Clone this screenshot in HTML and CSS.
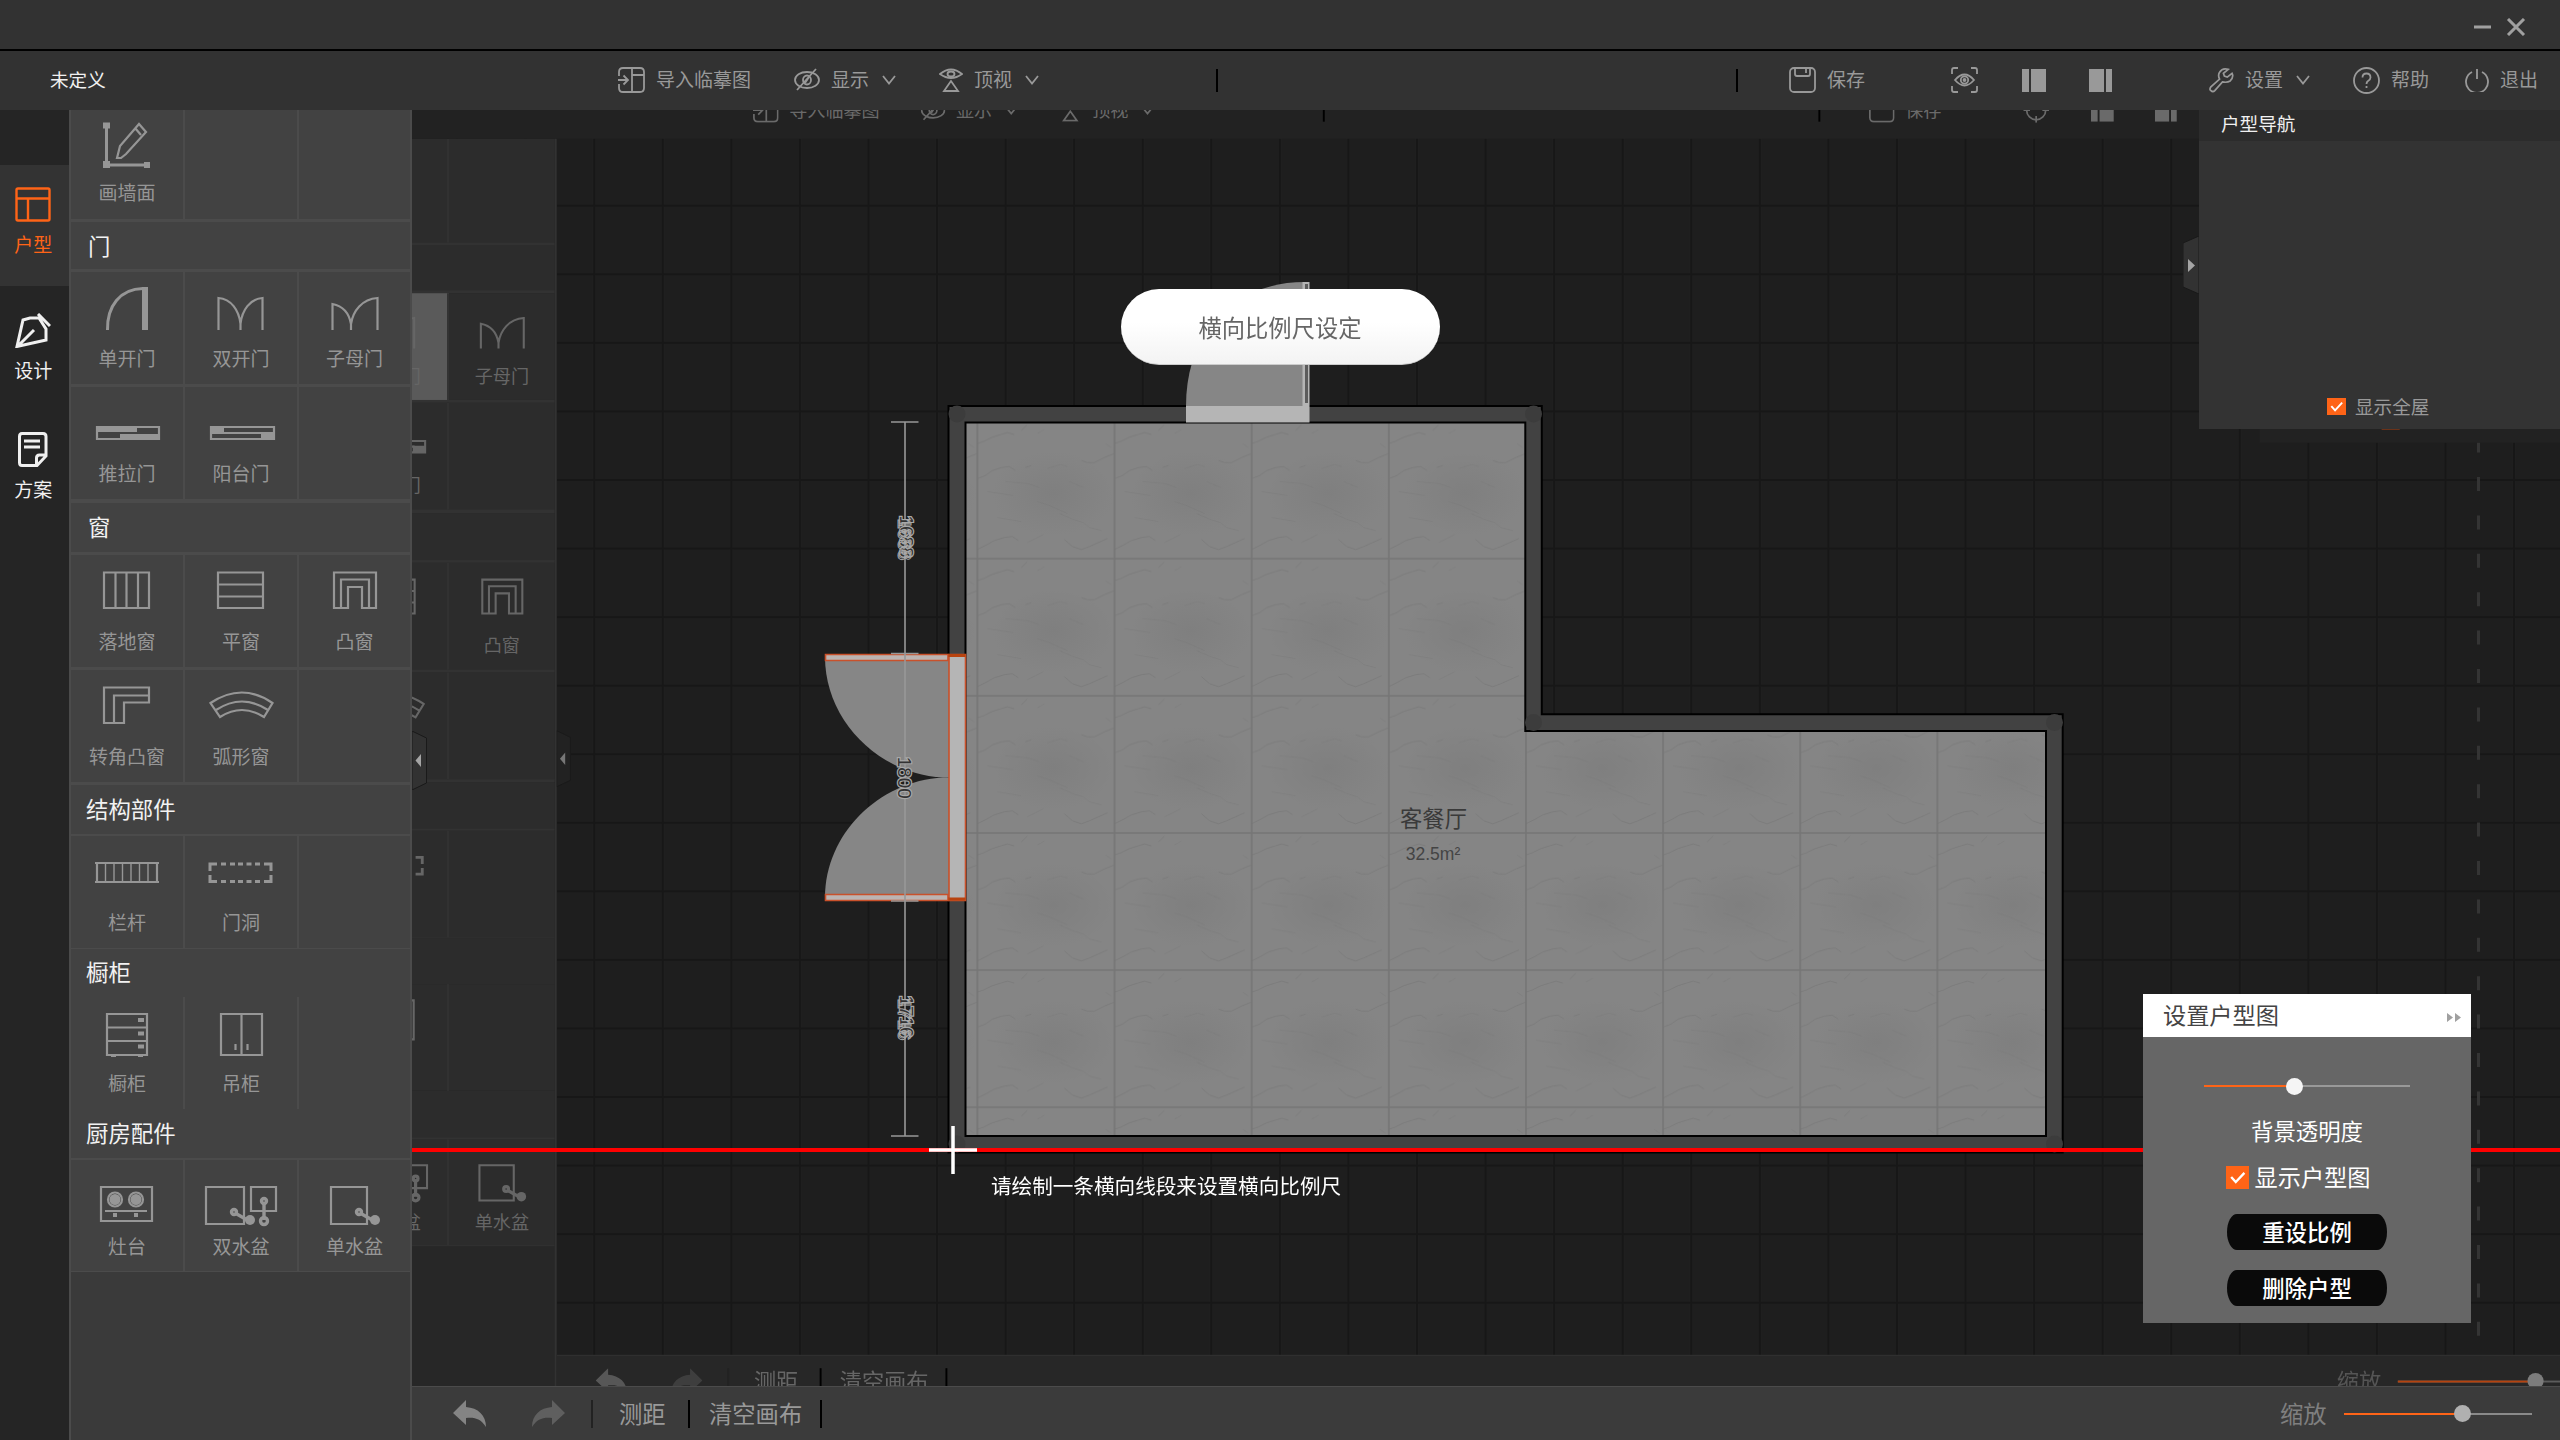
FILE: index.html
```html
<!DOCTYPE html>
<html lang="zh-CN">
<head>
<meta charset="utf-8">
<title>户型设计</title>
<link rel="stylesheet" href="styles.css">
</head>
<body>
<svg class="sprite" aria-hidden="true">
  <symbol id="import" viewBox="0 0 27 26"><path d="M1 9V5Q1 1 5 1h17q4 0 4 4v16q0 4-4 4H5q-4 0-4-4v-4M14 1v24M14 8h12M0 13h9M5.500 8.500 10 13l-4.500 4.500"/></symbol>
  <symbol id="eye-off" viewBox="0 0 26 24"><ellipse cx="13" cy="12" rx="12" ry="8"/><ellipse cx="13" cy="12" rx="4" ry="4.500"/><path d="M22 1 3 22M15 9l-4 6"/></symbol>
  <symbol id="top-view" viewBox="0 0 24 24"><path d="M1 6q11-9 22 0q-11 8-22 0z"/><ellipse cx="12" cy="6" rx="3.500" ry="2.500"/><path d="M12 13 5 23h14z"/></symbol>
  <symbol id="chev" viewBox="0 0 14 10"><path d="m1 1 6 7.500L13 1"/></symbol>
  <symbol id="save" viewBox="0 0 27 26"><rect x="1" y="1" width="25" height="24" rx="4"/><path d="M6 1v6q0 2 2 2h11q2 0 2-2V1M17 2v4"/></symbol>
  <symbol id="scan" viewBox="0 0 27 26"><path d="M1 7V3q0-2 2-2h4M20 1h4q2 0 2 2v4M26 19v4q0 2-2 2h-4M7 25H3q-2 0-2-2v-4M4 13q9.500-11 19 0q-9.500 11-19 0z"/><circle cx="13.500" cy="13" r="3.700"/><circle cx="13.500" cy="13" r="1"/></symbol>
  <symbol id="target" viewBox="0 0 27 26"><circle cx="13.500" cy="13" r="10"/><path d="M13.500 0v7M13.500 19v7M0 13h7M20 13h7"/></symbol>
  <symbol id="dock-left" viewBox="0 0 24 23"><path class="solid" d="M0 0h7v23H0zM9 0h15v23H9z"/></symbol>
  <symbol id="dock-right" viewBox="0 0 24 23"><path class="solid" d="M0 0h15v23H0zM17 0h6v23h-6z"/></symbol>
  <symbol id="wrench" viewBox="0 0 26 26"><path d="M20 2q-6-2-9 3q-2 3 0 7l-9 8q-2 3 0 4q2 2 4 0l8-9q5 1 8-1q4-4 2-8l-5 4-3-1-1-3z"/></symbol>
  <symbol id="help" viewBox="0 0 27 27"><circle cx="13.500" cy="13.500" r="12.500"/><path d="M9.500 10.500q0-4 4-4t4 4q0 2-2.500 3.500q-1.500 1-1.500 3M13.500 19v2"/></symbol>
  <symbol id="power" viewBox="0 0 24 24"><path d="M7 4a11 11 0 1 0 10 0M12 1v10"/></symbol>

  <symbol id="plan" viewBox="0 0 36 35"><rect x="1.500" y="1.500" width="33" height="32" rx="1.500"/><path d="M1 11.500h34M13 11.500V34"/></symbol>
  <symbol id="pen" viewBox="0 0 36 35"><path d="M8 7 15 5 24 5 31 16V27L2 33.500zM3 33 19 17M23 1 35 13"/></symbol>
  <symbol id="doc" viewBox="0 0 30 35"><path d="M4 1.500h21q3 0 3 3V24L19 33.500H4q-2.500 0-2.500-3v-26q0-3 2.500-3zM18.500 33V26q0-3 3-3H28M6 9h16M6 15h16"/></symbol>

  <symbol id="i-wall" viewBox="0 0 80 60"><path class="thick" d="M19.500 12v37M20 50h40"/><path d="M30 43l3-12L52 9l7 8-20 22-5 4zM48 13l6 7"/><path class="solid" d="M16 7.500h7v6h-7zM16 46h7v7h-7zM57 47h6v6h-6z"/></symbol>
  <symbol id="i-door1" viewBox="0 0 80 60"><path class="thick" d="M20.500 49C20 25 33 8 56 7.500"/><path class="solid" d="M55 6h6v43h-6z"/></symbol>
  <symbol id="i-door2" viewBox="0 0 80 60"><path d="M17.500 49V17C30 18 38 29 39.500 43C41 29 49 18 61.500 17V49M39.500 40v9"/></symbol>
  <symbol id="i-door3" viewBox="0 0 80 60"><path d="M17.500 49V23C28 25 34 32 36 43C38 30 47 18 62.500 17V49M36 40v9"/></symbol>
  <symbol id="i-slide" viewBox="0 0 80 60"><path d="M10 31h62v12H10z"/><path class="solid" d="M10 31h40v5H10zM33 38h39v5H33z"/></symbol>
  <symbol id="i-balcony" viewBox="0 0 80 60"><path d="M10 31h63v12H10zM22 37h40"/><path class="solid" d="M10 31h13v7H10zM60 36h13v7H60z"/></symbol>
  <symbol id="i-fwin" viewBox="0 0 80 60"><path d="M17 8.500h45v35.500H17zM28.500 8v36M39.500 8v36M51 8v36"/></symbol>
  <symbol id="i-hwin" viewBox="0 0 80 60"><path d="M17 8.500h45v35.500H17zM17 20.500h45M17 32.500h45"/></symbol>
  <symbol id="i-bay" viewBox="0 0 80 60"><path d="M19 44V8.500h42V44H47V23H33V44zM26 44V15.500h28V44"/></symbol>
  <symbol id="i-corner" viewBox="0 0 80 60"><path d="M17 44V8.500h45v15H37V44zM27 44V16.500h35"/></symbol>
  <symbol id="i-arc" viewBox="0 0 80 60"><path d="M9.500 24Q41 3 71.500 24L63 38Q41 24 19 38zM15 31Q41 14 67 31"/></symbol>
  <symbol id="i-rail" viewBox="0 0 80 60"><path d="M8 18h64M8 37h64M10 18v19M70 18v19"/><path class="hair" d="M18.500 18v19M27 18v19M35.500 18v19M44 18v19M52.500 18v19M61 18v19"/></symbol>
  <symbol id="i-hole" viewBox="0 0 80 60"><path class="thick" d="M9 26V19h7M20 19h5M29 19h5M37 19h5M45.500 19h5M54 19h5M63 19h7v7M70 30v6.500h-7M59 36.500h-5M50.500 36.500h-5M42 36.500h-5M34 36.500h-5M25 36.500h-5M16 36.500H9V30"/></symbol>
  <symbol id="i-cab" viewBox="0 0 80 60"><path d="M20 8h40v41H20zM20 21.500h40M20 35h40"/><path class="solid" d="M51 12h6v4h-6zM51 25.500h6v4h-6zM51 38.500h6v4h-6zM24 49h5v2h-5zM51 49h5v2h-5z"/></symbol>
  <symbol id="i-hang" viewBox="0 0 80 60"><path d="M20 8h41v41H20zM40.500 8v41M34.500 38v6M46.500 38v6"/></symbol>
  <symbol id="i-stove" viewBox="0 0 80 60"><path d="M14 18h51v34H14zM18 42h42"/><circle class="solid" cx="28" cy="30.500" r="5.500"/><circle class="solid" cx="49" cy="30.500" r="5.500"/><circle cx="28" cy="30.500" r="7"/><circle cx="49" cy="30.500" r="7"/><path class="solid" d="M26 44h4v4h-4zM47 44h4v4h-4z"/></symbol>
  <symbol id="i-sink2" viewBox="0 0 80 60"><path d="M5 18h38v37H5zM50 18h25v24H50z"/><g class="tap"><path d="m34 44 14 8M63 33v18"/><circle cx="33" cy="43" r="2.500"/><circle class="solid" cx="49" cy="51" r="5"/><circle cx="63" cy="32" r="2.500"/><circle cx="63" cy="52" r="3.500"/></g></symbol>
  <symbol id="i-sink1" viewBox="0 0 80 60"><path d="M16 18h36v37H16z"/><g class="tap"><path d="m45 44 14 8"/><circle cx="44" cy="43" r="2.500"/><circle class="solid" cx="60" cy="51" r="5"/></g></symbol>
  <symbol id="undo" viewBox="0 0 33 27"><path class="solid" d="M0 13 13 0v7C25 8 33 15 33 27C28 19 22 17 13 18v7z"/></symbol>
  <symbol id="check" viewBox="0 0 20 18"><path d="m4.500 8.500 4 4.500L16 5"/></symbol>
</svg>

<div class="shell">
  <header class="titlebar">
    <svg class="win" viewBox="0 0 52 18"><path d="M0 9h17M34 1l16 16M50 1 34 17"/></svg>
  </header>
  <nav class="toolbar">
    <span class="project">未定义</span>
    <span class="tool"><svg class="ic" width="27" height="26"><use href="#import"/></svg><b>导入临摹图</b></span>
    <span class="tool"><svg class="ic" width="26" height="24"><use href="#eye-off"/></svg><b>显示</b><svg class="ic chev" width="14" height="10"><use href="#chev"/></svg></span>
    <span class="tool"><svg class="ic" width="24" height="24"><use href="#top-view"/></svg><b>顶视</b><svg class="ic chev" width="14" height="10"><use href="#chev"/></svg></span>
    <i class="sep"></i>
    <i class="sep"></i>
    <span class="tool"><svg class="ic" width="27" height="26"><use href="#save"/></svg><b>保存</b></span>
    <span class="tool"><svg class="ic" width="27" height="26"><use href="#scan"/></svg></span>
    <span class="tool"><svg class="ic" width="24" height="23"><use href="#dock-left"/></svg></span>
    <span class="tool"><svg class="ic" width="24" height="23"><use href="#dock-right"/></svg></span>
    <span class="tool"><svg class="ic" width="25" height="26"><use href="#wrench"/></svg><b>设置</b><svg class="ic chev" width="14" height="10"><use href="#chev"/></svg></span>
    <span class="tool"><svg class="ic" width="27" height="27"><use href="#help"/></svg><b>帮助</b></span>
    <span class="tool"><svg class="ic" width="24" height="24"><use href="#power"/></svg><b>退出</b></span>
  </nav>

  <div class="work">
    <aside class="tabs">
      <div class="tab active"><svg class="ic" width="36" height="35"><use href="#plan"/></svg><span>户型</span></div>
      <div class="tab"><svg class="ic" width="36" height="35"><use href="#pen"/></svg><span>设计</span></div>
      <div class="tab"><svg class="ic" width="30" height="35"><use href="#doc"/></svg><span>方案</span></div>
    </aside>

    <aside class="panel">
      <div class="row first"><div class="cell"><svg><use href="#i-wall"/></svg><span>画墙面</span></div><div class="cell"></div><div class="cell"></div></div>
      <h3 class="h-door">门</h3>
      <div class="row"><div class="cell"><svg><use href="#i-door1"/></svg><span>单开门</span></div><div class="cell"><svg><use href="#i-door2"/></svg><span>双开门</span></div><div class="cell"><svg><use href="#i-door3"/></svg><span>子母门</span></div></div>
      <div class="row last"><div class="cell"><svg><use href="#i-slide"/></svg><span>推拉门</span></div><div class="cell"><svg><use href="#i-balcony"/></svg><span>阳台门</span></div><div class="cell"></div></div>
      <h3 class="h-window">窗</h3>
      <div class="row"><div class="cell"><svg><use href="#i-fwin"/></svg><span>落地窗</span></div><div class="cell"><svg><use href="#i-hwin"/></svg><span>平窗</span></div><div class="cell"><svg><use href="#i-bay"/></svg><span>凸窗</span></div></div>
      <div class="row"><div class="cell"><svg><use href="#i-corner"/></svg><span>转角凸窗</span></div><div class="cell"><svg><use href="#i-arc"/></svg><span>弧形窗</span></div><div class="cell"></div></div>
      <h3 class="h-part">结构部件</h3>
      <div class="row thin"><div class="cell"><svg><use href="#i-rail"/></svg><span>栏杆</span></div><div class="cell"><svg><use href="#i-hole"/></svg><span>门洞</span></div><div class="cell"></div></div>
      <h3 class="h-cabinet">橱柜</h3>
      <div class="row open"><div class="cell"><svg><use href="#i-cab"/></svg><span>橱柜</span></div><div class="cell"><svg><use href="#i-hang"/></svg><span>吊柜</span></div><div class="cell"></div></div>
      <h3 class="h-kitchen">厨房配件</h3>
      <div class="row end"><div class="cell"><svg><use href="#i-stove"/></svg><span>灶台</span></div><div class="cell"><svg><use href="#i-sink2"/></svg><span>双水盆</span></div><div class="cell"><svg><use href="#i-sink1"/></svg><span>单水盆</span></div></div>
    </aside>

    <div class="column">
      <main class="stage">
        <svg class="plan" viewBox="412 110 2148 1276">
          <defs>
            <pattern id="grid" x="45.700" y="0" width="68.565" height="68.565" patternUnits="userSpaceOnUse"><path class="gridline" d="M0 0H68.565M0 0V68.565M68.565 0V68.565M0 68.565H68.565"/></pattern>
            <radialGradient id="cloud"><stop offset="0" stop-color="#7f7f7f"/><stop offset="1" stop-color="#7f7f7f" stop-opacity="0"/></radialGradient>
            <pattern id="tile" x="977.400" y="558.700" width="137.140" height="137.140" patternUnits="userSpaceOnUse">
              <rect class="floor" width="137.140" height="137.140"/>
              <ellipse fill="url(#cloud)" cx="76" cy="72" rx="61" ry="42"/>
              <path class="vein" d="M0 22 6 20 14 16 20 14 30 11 37 13M44 9 50 3M0 57 8 54 15 49 24 46 32 45 38 49M48 46 54 44M104 39 110 41 117 41 127 36 137 32M0 128 8 124 17 119 27 116 35 115 41 119M87 118 95 125 104 128 112 125 121 121 130 117"/>
              <path class="vein faint" d="M60 12 67 8M70 47 83 43 90 45M28 60 50 62 62 66M10 70 36 74M60 80 72 84 90 92M82 92 96 98 106 101 112 106 124 109M50 121 58 117 66 113M128 22 134 26M92 60 106 66M20 96 44 100"/>
              <path class="joint" d="M0 0H137.140V137.140H0z"/>
            </pattern>
          </defs>
          <rect class="ground" x="412" y="110" width="2148" height="1276"/>
          <rect x="412" y="110" width="2148" height="1276" fill="url(#grid)"/>
          <path class="bound" d="M2478.500 438.600V1337"/>

          <path class="wall" d="M948.500 406H1541.800V714.300H2062.700V1152.500H948.500z"/>
          <path class="edge" fill="url(#tile)" d="M965.500 422.500H1525.300V731H2046V1136H965.500z"/>
          <g class="joints"><circle cx="957" cy="414" r="8.500"/><circle cx="1533.500" cy="414" r="8.500"/><circle cx="1533.500" cy="722.500" r="8.500"/><circle cx="2054.500" cy="722.500" r="8.500"/><circle cx="2054.500" cy="1144" r="8.500"/><circle cx="957" cy="1144" r="8.500"/></g>

          <path class="swing" d="M1186 406C1186 330 1235 282 1305 282V406z"/>
          <path class="sill" d="M1186 406H1309.500V422.500H1186zM1302.500 282h7v124h-7z"/>
          <path class="slot" d="M1306.500 284V403"/>

          <path class="swing" d="M825 657H949V777.500H943C878 774 825 720 825 657z"/>
          <path class="swing" d="M825 897H949V777.500H943C878 781 825 835 825 897z"/>
          <path class="leaf" d="M825.500 654.500h122.500v6h-122.500zM825.500 894.500h122.500v6h-122.500z"/>
          <path class="leaf base" d="M949 654.500h16.500v246H949z"/>
          <path class="hinge" d="M948.500 655.500h17M948.500 899h17"/>

          <path class="dim" d="M905 422V1136M891 422h27.500M891 653.500h27.500M891 901h27.500M891 1136h27.500"/>
          <g class="num">
            <text transform="translate(899.500 536.500) rotate(90)">1688</text><text class="over" transform="translate(898 539.500) rotate(90)">1688</text>
            <text transform="translate(898 777.700) rotate(90)">1800</text>
            <text transform="translate(899.500 1016.500) rotate(90)">1716</text><text class="over" transform="translate(898 1019.500) rotate(90)">1716</text>
          </g>
          <text class="room" x="1433.500" y="827">客餐厅</text>
          <text class="area" x="1433" y="860">32.5m²</text>
        </svg>

        <div class="shell ghost">
          <header class="titlebar"></header>
          <nav class="toolbar">
            <span class="project"></span>
            <span class="tool"><svg class="ic" width="27" height="26"><use href="#import"/></svg><b>导入临摹图</b></span>
            <span class="tool"><svg class="ic" width="26" height="24"><use href="#eye-off"/></svg><b>显示</b><svg class="ic chev" width="14" height="10"><use href="#chev"/></svg></span>
            <span class="tool"><svg class="ic" width="24" height="24"><use href="#top-view"/></svg><b>顶视</b><svg class="ic chev" width="14" height="10"><use href="#chev"/></svg></span>
            <i class="sep"></i>
            <i class="sep"></i>
            <span class="tool"><svg class="ic" width="27" height="26"><use href="#save"/></svg><b>保存</b></span>
            <span class="tool"><svg class="ic" width="27" height="26"><use href="#target"/></svg></span>
            <span class="tool"><svg class="ic" width="24" height="23"><use href="#dock-left"/></svg></span>
            <span class="tool"><svg class="ic" width="24" height="23"><use href="#dock-right"/></svg></span>
          </nav>
          <div class="work">
            <div></div>
            <div class="panel">
              <div class="row first"><div class="cell"></div><div class="cell"></div><div class="cell"></div></div>
              <h3></h3>
              <div class="row"><div class="cell"></div><div class="cell lit"><svg><use href="#i-door2"/></svg><span>双开门</span></div><div class="cell"><svg><use href="#i-door3"/></svg><span>子母门</span></div></div>
              <div class="row last"><div class="cell"></div><div class="cell"><svg><use href="#i-balcony"/></svg><span>阳台门</span></div><div class="cell"></div></div>
              <h3 class="h-window"></h3>
              <div class="row"><div class="cell"></div><div class="cell"><svg><use href="#i-hwin"/></svg></div><div class="cell"><svg><use href="#i-bay"/></svg><span>凸窗</span></div></div>
              <div class="row"><div class="cell"></div><div class="cell"><svg><use href="#i-arc"/></svg></div><div class="cell"></div></div>
              <h3 class="h-part"></h3>
              <div class="row thin"><div class="cell"></div><div class="cell"><svg><use href="#i-hole"/></svg></div><div class="cell"></div></div>
              <h3 class="h-cabinet"></h3>
              <div class="row open"><div class="cell"></div><div class="cell"><svg><use href="#i-hang"/></svg></div><div class="cell"></div></div>
              <h3 class="h-kitchen"></h3>
              <div class="row end"><div class="cell"></div><div class="cell"><svg><use href="#i-sink2"/></svg><span>双水盆</span></div><div class="cell"><svg><use href="#i-sink1"/></svg><span>单水盆</span></div></div>
            </div>
            <div class="column">
              <div class="stage">
                <div class="flap left"><svg viewBox="0 0 15 59"><path class="tabshape" d="M0 0 14.500 7V52L0 59z"/><path class="arrow" d="M9 23v13L3.500 29.500z"/></svg></div>
                <section class="navi"><h4></h4><label class="showall"><i class="box"></i></label></section>
              </div>
              <footer class="bottombar">
                <svg class="back" width="33" height="27"><use href="#undo"/></svg>
                <svg class="fwd" width="33" height="27"><use href="#undo"/></svg>
                <i class="sep soft"></i><span>测距</span><i class="sep"></i><span>清空画布</span><i class="sep"></i>
                <span class="zoom">缩放</span><div class="slider"><i class="fill" style="width:144px"></i><i class="knob"></i></div>
              </footer>
            </div>
          </div>
        </div>

        <div class="flap left"><svg viewBox="0 0 15 59"><path class="tabshape" d="M0 0 14.500 7V52L0 59z"/><path class="arrow" d="M9 23v13L3.500 29.500z"/></svg></div>
        <div class="ruler"></div>
        <svg class="cross" viewBox="0 0 48 48"><path d="M0 24h48M24 0v48"/></svg>
        <div class="hint">请绘制一条横向线段来设置横向比例尺</div>
        <div class="pill">横向比例尺设定</div>

        <div class="flap right"><svg viewBox="0 0 16 58"><path class="tabshape" d="M16 0 0 7V51L16 58z"/><path class="arrow" d="M5 23v13L12 29.500z"/></svg></div>
        <section class="navi">
          <h4>户型导航</h4>
          <label class="showall"><i class="box"><svg><use href="#check"/></svg></i><span>显示全屋</span></label>
        </section>

        <section class="setup">
          <h4>设置户型图<svg viewBox="0 0 14 9"><path d="M0 0 6 4.500 0 9zM8 0l6 4.500L8 9z"/></svg></h4>
          <div class="slider"><i class="fill" style="width:90px"></i><i class="knob"></i></div>
          <p>背景透明度</p>
          <label><i class="box"><svg><use href="#check"/></svg></i><span>显示户型图</span></label>
          <button>重设比例</button>
          <button>删除户型</button>
        </section>
      </main>

      <footer class="bottombar">
        <svg class="back" width="33" height="27"><use href="#undo"/></svg>
        <svg class="fwd" width="33" height="27"><use href="#undo"/></svg>
        <i class="sep soft"></i><span>测距</span><i class="sep"></i><span>清空画布</span><i class="sep"></i>
        <span class="zoom">缩放</span><div class="slider"><i class="fill" style="width:118px"></i><i class="knob"></i></div>
      </footer>
    </div>
  </div>
</div>
</body>
</html>
```
FILE: styles.css
```css
* { box-sizing: border-box; }
body { margin: 0; width: 2560px; height: 1440px; overflow: hidden; background: #1e1e1e; font-family: "Noto Sans CJK SC", sans-serif; font-weight: 400; }
h3, h4, p { margin: 0; font-weight: 400; }
i, b { font-style: normal; font-weight: 400; }
svg { display: block; flex: none; }
.sprite { position: absolute; width: 0; height: 0; }

.shell {
  --bar: #323232; --panel: #424242; --base: #3a3a3a; --line: #4b4b4b; --text: #999; --label: #969696;
  --foot: #3b3b3b; --fwd: #5f5f5f; --back: #848484; --foottext: #999; --zoom: #7f7f7f;
  --accent: #ff6417; --track: #8a8a8a; --knob: #b0b0b0;
  --navhead: #2c2c2c; --nav: #333; --flap: #323232; --arrow: #a5a5a5; --sep: #000;
  width: 2560px; height: 1440px; display: grid; grid-template-rows: 51px 59px 1fr;
}
.ghost {
  --bar: #222; --panel: #2c2c2c; --base: #272727; --line: #323232; --text: #6a6a6a; --label: #666;
  --foot: #272727; --fwd: #3e3e3e; --back: #575757; --foottext: #666; --zoom: #555;
  --accent: #b5430f; --track: #5c5c5c; --knob: #7c7c7c;
  --navhead: #222; --nav: #222; --flap: #222; --arrow: #777;
  position: absolute; left: -248.200px; top: -75.600px; transform: scale(.953); transform-origin: 0 0;
}

.ic, .cell svg { fill: none; stroke: currentColor; stroke-width: 1.8; }
.solid { fill: currentColor; stroke: none; }

.titlebar { background: var(--bar); border-bottom: 2px solid #000; display: flex; justify-content: flex-end; }
.win { width: 52px; height: 18px; margin: 18px 34px 0 0; fill: none; stroke: #a0a0a0; stroke-width: 3; }

.toolbar {
  background: var(--bar); color: var(--text); font-size: 19px; display: grid; align-items: center; padding-bottom: 1px;
  grid-template-columns: 618px 176px 145px 277px 520px 53px 162px 71px 67px 120px 144px 112px 95px;
}
.project { padding: 0 0 3px 50px; color: #f0f0f0; font-size: 18.600px; }
.tool { display: flex; align-items: center; gap: 11px; line-height: 24px; white-space: nowrap; }
.tool b { margin-top: -3px; }
.tool .chev { margin-left: 2px; stroke-width: 1.8; }
.sep { display: block; width: 2px; height: 23px; background: var(--sep); }

.work { display: grid; grid-template-columns: 69px 343px 1fr; min-height: 0; }
.tabs { background: #252525; padding-top: 55px; color: #f0f0f0; font-size: 19px; }
.tab { height: 119px; padding: 22px 2.500px 0 0; display: flex; flex-direction: column; align-items: center; gap: 10px; line-height: 24px; }
.tab .ic { stroke-width: 3; }
.tab.active { height: 121px; margin-bottom: 5px; background: #333; color: #ff6417; }
.tab.active .ic { stroke-width: 2.4; }

.panel { background: var(--base); border: solid var(--line); border-width: 0 2px; overflow: hidden; }
.row { display: grid; grid-template-columns: 114px 114px 111px; height: 115px; background: var(--panel); border-bottom: 3px solid var(--line); }
.row.first { height: 112px; align-items: end; overflow: hidden; }
.row.last { height: 116px; border-bottom-width: 4px; }
.row.thin { height: 113px; border-bottom-width: 1px; }
.row.open { height: 112px; border: 0; }
.row.end { height: 112px; border-bottom-width: 1px; }
.cell { height: 100%; padding-top: 9px; border-right: 2px solid var(--line); color: var(--label); display: flex; flex-direction: column; align-items: center; font-size: 19px; line-height: 22px; }
.cell:last-child { border-right: 0; }
.cell svg { width: 80px; height: 60px; stroke-width: 2.2; margin-bottom: 6px; }
.cell span { white-space: nowrap; }
.row.first .cell { padding-top: 5px; }
.cell.lit { background: #5a5a5a; }
.thick { stroke-width: 3; }
.hair { stroke-width: 1.4; }
.tap { stroke-width: 3.4; }
.panel h3 { height: 50px; padding-left: 15px; background: var(--panel); border-bottom: 3px solid var(--line); color: #f2f2f2; font-size: 22.400px; line-height: 46px; }
.panel .h-window { height: 52px; }
.panel .h-part { height: 51px; border-bottom-width: 2px; }
.panel .h-cabinet { height: 48px; border: 0; line-height: 45px; }
.panel .h-kitchen { height: 51px; border-bottom-width: 2px; }
.panel .h-door, .panel .h-window { padding-left: 17px; }

.column { display: grid; grid-template-rows: 1fr 54px; min-width: 0; min-height: 0; }
.stage { position: relative; overflow: hidden; }
.plan { width: 2148px; height: 1276px; }
.ground { fill: #1e1e1e; }
.gridline { fill: none; stroke: #171717; stroke-width: 2; }
.bound { stroke: #343434; stroke-width: 3; stroke-dasharray: 14 24.400; }
.wall { fill: #424242; stroke: #000; stroke-width: 2; }
.edge { stroke: #000; stroke-width: 2; }
.joints { fill: #3c3c3c; }
.floor { fill: #858585; }
.vein { fill: none; stroke: #747474; stroke-width: .8; opacity: .75; }
.faint { opacity: .4; }
.joint { fill: none; stroke: #757575; stroke-width: 1.6; }
.swing { fill: #868686; }
.sill { fill: #b5b5b5; }
.slot { stroke: #5c5c5c; stroke-width: 3; }
.leaf { fill: #bcb4b2; stroke: #c9512b; stroke-width: 1.6; }
.base { fill: #b5b5b5; }
.hinge { stroke: #b8430f; stroke-width: 3; }
.dim { fill: none; stroke: #989898; stroke-width: 1.6; }
.num { font: 18.800px "Liberation Sans", sans-serif; text-anchor: middle; fill: #333; stroke: #a8a8a8; stroke-width: 2.4; paint-order: stroke; }
.num .over { fill: none; stroke-width: 1; }
.room { font-size: 22.300px; fill: #3a3a3a; text-anchor: middle; }
.area { font: 17.500px "Liberation Sans", sans-serif; fill: #444; text-anchor: middle; }

.flap { position: absolute; }
.flap.left { left: 0; top: 621px; width: 15px; height: 59px; }
.flap.right { left: 1771px; top: 126px; width: 16px; height: 58px; }
.flap svg { width: 100%; height: 100%; }
.tabshape { fill: var(--flap); stroke: #1a1a1a; stroke-width: 1; }
.arrow { fill: var(--arrow); }

.ruler { position: absolute; left: 0; right: 0; top: 1038px; height: 4px; background: #f00; }
.cross { position: absolute; left: 517px; top: 1016px; width: 48px; height: 48px; fill: none; stroke: #fff; stroke-width: 3.500; }
.hint { position: absolute; left: 579px; top: 1059.500px; color: #fff; font-size: 20.600px; line-height: 30px; white-space: nowrap; }
.pill { position: absolute; left: 708.500px; top: 178.500px; width: 319px; height: 76.500px; border-radius: 38px; background: linear-gradient(#fff 45%, #f3f3f3); border-bottom: 1px solid #ccc; color: #666; font-size: 23.300px; line-height: 76px; text-align: center; }

.navi { position: absolute; left: 1787px; top: 0; width: 361px; height: 319px; background: var(--nav); color: #999; font-size: 18.600px; }
.navi h4 { height: 31px; padding-left: 22px; background: var(--navhead); color: #f0f0f0; font-size: 18.600px; line-height: 25px; }
.showall { display: flex; align-items: center; gap: 9px; height: 26px; margin: 252px 0 0 128px; line-height: 26px; }
.box { display: block; width: 19px; height: 17px; background: var(--accent); }
.box svg { width: 100%; height: 100%; fill: none; stroke: #fff; stroke-width: 2; }

.slider { position: relative; height: 2px; background: var(--track); display: flex; align-items: center; }
.fill { height: 2px; background: var(--accent); flex: none; }
.knob { width: 17px; height: 17px; border-radius: 50%; background: var(--knob); margin-left: -8px; flex: none; }

.setup { --knob: #f5f5f5; --track: #999; position: absolute; left: 1731px; top: 884px; width: 328px; height: 329px; background: #666; color: #fff; font-size: 22.400px; display: flex; flex-direction: column; align-items: center; }
.setup h4 { width: 100%; height: 43px; padding: 0 10px 0 20px; background: #fff; color: #444; font-size: 23.200px; line-height: 41px; display: flex; justify-content: space-between; }
.setup h4 svg { width: 14px; height: 9px; margin-top: 19px; fill: #a0a0a0; }
.setup .slider { width: 206px; margin-top: 48px; }
.setup p { margin-top: 28px; line-height: 30px; }
.setup label { display: flex; align-items: center; gap: 6px; margin: 17px 18px 0 0; font-size: 23.200px; line-height: 30px; height: 30px; }
.setup label span { margin-top: -3px; }
.setup .box { width: 23px; height: 23px; }
.setup button { width: 160px; height: 36px; margin-top: 20px; padding: 0; border: 0; border-radius: 10px / 18px; background: #0a0a0a; color: #fff; font: 500 22.400px/34px "Noto Sans CJK SC", sans-serif; padding-bottom: 2px; }
.setup label + button { margin-top: 22px; }

.bottombar { background: var(--foot); border-top: 1px solid var(--line); padding-left: 41px; color: var(--foottext); font-size: 23.300px; line-height: 50px; display: grid; align-items: center; grid-template-columns: 79px 59px 28px 69px 21px 111px 1460px 64px 188px; white-space: nowrap; }
.bottombar span { margin-top: -2px; }
.bottombar .back { color: var(--back); }
.bottombar .fwd { color: var(--fwd); transform: scaleX(-1); }
.bottombar .sep { height: 28px; }
.bottombar .soft { background: #222; }
.bottombar .zoom { color: var(--zoom); }
```
